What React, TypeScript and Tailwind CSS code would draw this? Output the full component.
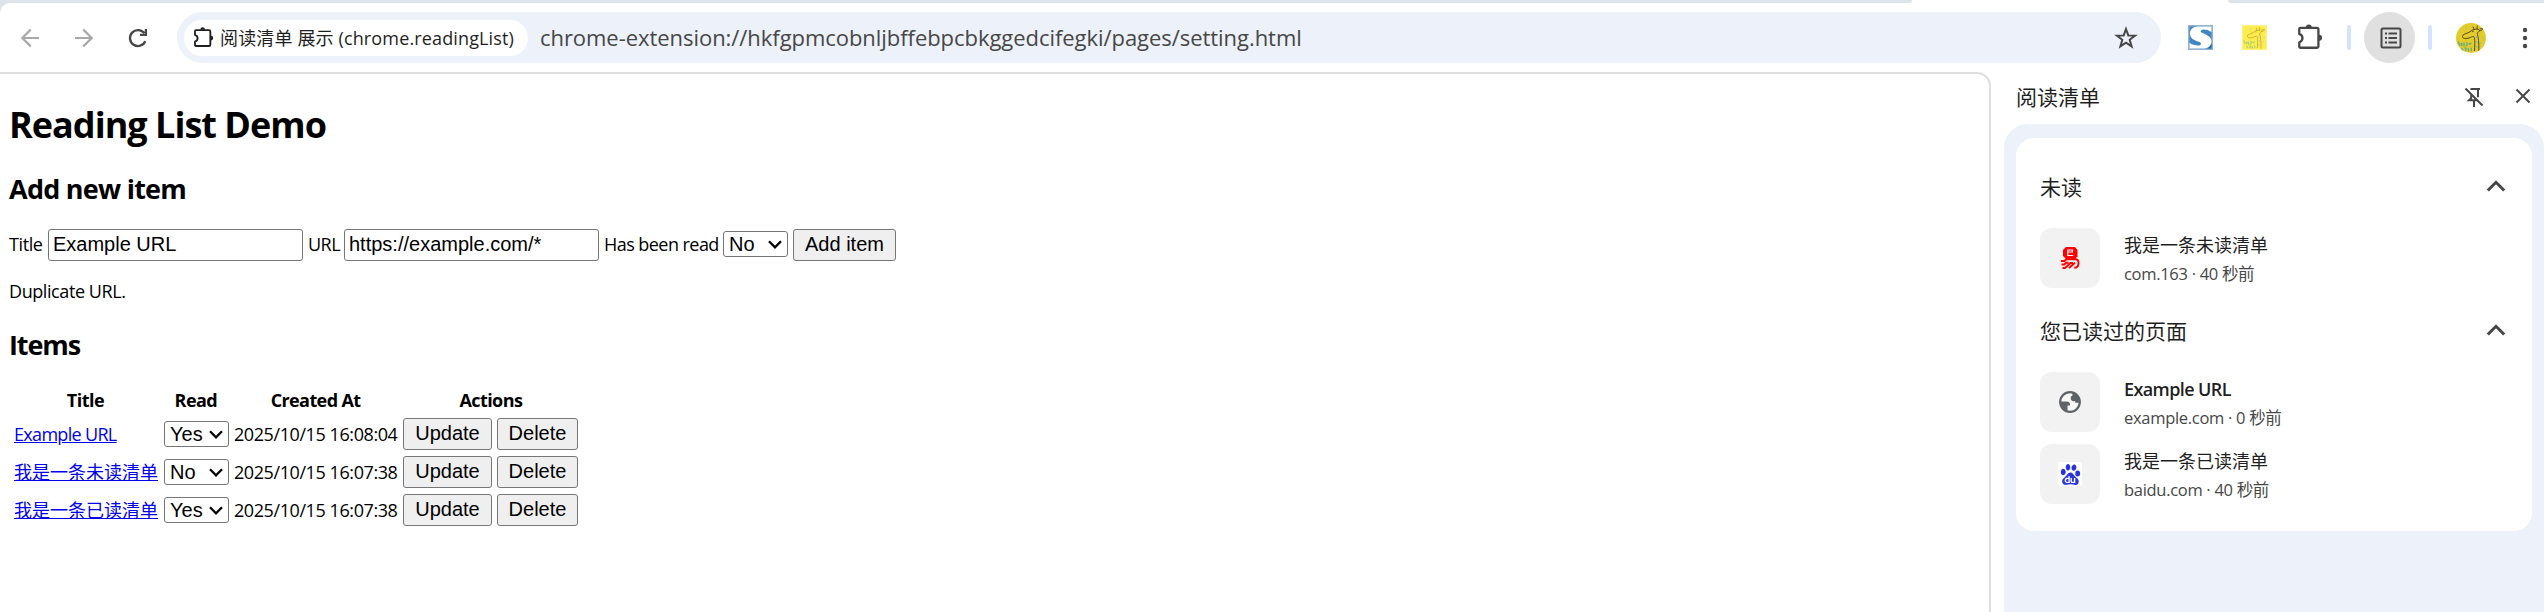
import type { ReactNode } from "react";
import { SiBaidu } from "react-icons/si";

const ARIAL = "font-['Liberation_Sans',Arial,sans-serif] text-[20px] leading-[22px]";

function ExtensionIcon({ className }: { className: string }) {
  return (
    <svg viewBox="0 0 24 24" className={className} fill="none">
      <path
        d="M3.2 3.7H18a1.6 1.6 0 0 1 1.6 1.6V21.2a1.6 1.6 0 0 1-1.6 1.6H2.4a1.2 1.2 0 0 1-1.2-1.2v-4.1c1.9-.6 3.1-2 3.1-4s-1.2-3.4-3.1-4V4.900a1.2 1.2 0 0 1 1.2-1.2z"
        stroke="currentColor"
        strokeWidth="2.2"
        strokeLinejoin="round"
      />
      <path d="M7.6 3.2a2.8 2.8 0 0 1 5.6 0zM20.2 10.4a2.9 2.9 0 0 1 0 5.8z" fill="currentColor" />
    </svg>
  );
}

function Giraffe({ className, soft }: { className: string; soft?: boolean }) {
  return (
    <svg viewBox="0 0 30 30" className={className}>
      <rect width="30" height="30" fill={soft ? "#fdec4f" : "#e3cb2c"} />
      {soft && <rect x=".7" y=".7" width="28.6" height="28.6" fill="none" stroke="#fff27c" strokeWidth="1.4" />}
      <g fill="none" stroke={soft ? "#c9a92f" : "#544a14"} strokeWidth="1" strokeLinecap="round">
        <path d="M18 6.500c-2 .3-3.500 2.300-6 3.300-3 1-5.500 1.700-5.500 3.700 0 2.500 4 2.300 6.500 1.500 2-.7 3-1.500 4.500-1.500 1.500.5 1.500 5 1 14" />
        <path d="M18 6.500l-.8-2.500M21 6l.3-3M18 6.500c2-.8 4.500-.6 5.500.8-.5 1.700-1.500 2.200-2.500 2.700 1.500 4 2 10 1.800 18M24 6l3-.6c-.3 1.400-1.500 2.200-3.200 2.400" />
        <path d="M16.500 8.600h.6" />
      </g>
      <g stroke={soft ? "#a5cf78" : "#62ad84"} strokeWidth="1.300" fill="none" strokeLinecap="round">
        <path d="M2.500 19l1 3M5 20.500c1.500-.5 1.500 2 0 2M8 20v3M10.500 19.500c1.500.5.500 3-.5 3.500M13 21l2-.5M5.500 25.500l1.500 2M9 25c1 0 1.500 1.500.5 2.500M12 25.500l.8 2.500M15 25l.5 2.500" />
      </g>
      <g fill={soft ? "#b4d9a0" : "#7fc4b0"}>
        <circle cx="20.500" cy="14" r=".9" /><circle cx="21" cy="19" r=".9" /><circle cx="26.500" cy="15" r=".8" />
        <circle cx="20.300" cy="24" r=".9" /><circle cx="10" cy="5" r=".7" /><circle cx="25" cy="20" r=".8" />
      </g>
    </svg>
  );
}

function Toolbar() {
  return (
    <div className="flex h-[69px] w-full items-start rounded-tl-[10px] bg-white pt-[9px] text-[#474747]">
      <div className="flex h-[51px] w-[177px] items-center pl-[16px]">
        <svg viewBox="0 0 28 28" className="h-[28px] w-[28px]" fill="none" stroke="#a8a8a8" strokeWidth="2.2">
          <path d="M23 14H6.500M14.700 5.600L6.300 14l8.400 8.400" />
        </svg>
        <svg viewBox="0 0 28 28" className="ml-[26px] h-[28px] w-[28px]" fill="none" stroke="#a8a8a8" strokeWidth="2.2">
          <path d="M5 14h16.500M13.300 5.600l8.400 8.400-8.400 8.400" />
        </svg>
        <svg viewBox="0 0 28 28" className="ml-[26px] h-[28px] w-[28px]" fill="none" stroke="#474747" strokeWidth="2.3">
          <path d="M21.300 17.300A8 8 0 1 1 20.300 9.100M21.900 5v5.900H16" />
        </svg>
      </div>
      <div className="flex h-[51px] w-[1984px] items-center rounded-full bg-[#ecf1fa] pl-[7px]">
        <div className="flex h-[36px] w-[344px] items-center rounded-full bg-white pl-[10px] text-[#1f1f1f]">
          <ExtensionIcon className="h-[20px] w-[20px] -translate-y-[1px]" />
          <span className="ml-[6px] whitespace-nowrap text-[18px] leading-[24px] tracking-[0.14px]">
            阅读清单 展示 (chrome.readingList)
          </span>
        </div>
        <span className="ml-[12px] -translate-y-[1px] whitespace-nowrap text-[22px] leading-[28px] tracking-[-0.05px] text-[#474747]">
          chrome-extension://hkfgpmcobnljbffebpcbkggedcifegki/pages/setting.html
        </span>
        <svg viewBox="0 0 24 24" className="mr-[23px] ml-auto h-[24px] w-[24px]" fill="none" stroke="#474747" strokeWidth="2">
          <path d="M12 3l2.300 6.400 6.800.2-5.400 4.200 1.900 6.600L12 16.600l-5.600 3.800 1.900-6.600-5.400-4.200 6.800-.2z" />
        </svg>
      </div>
      <div className="flex h-[51px] flex-1 items-center">
        <svg viewBox="0 0 25 25" className="ml-[27px] h-[25px] w-[25px]">
          <rect width="25" height="25" fill="#8fb3d1" />
          <rect x="1.500" y="1.500" width="22" height="22" fill="#3f86c3" />
          <path d="M23.500 1.500v5.500c-3-2-6-2.700-8.500-2.500-2.500.3-3 2.300-1 3.300 3 1.500 9.500 3.500 9.500 8.200 0 3.500-2.500 7.500-7.500 7.500H1.500v-5.500c3 2 7 2.800 9.500 2.400 2.400-.4 2.800-2.400.5-3.400C8 15.500 2 14.500 2 8.500c0-4 3-7 7.500-7z" fill="#fff" />
          <path d="M19 23.500c2.500-.6 4-2.800 4.500-5v5z" fill="#2566a3" />
        </svg>
        <Giraffe soft className="ml-[29px] h-[25px] w-[25px]" />
        <ExtensionIcon className="ml-[31px] h-[25px] w-[25px] -translate-y-[1px]" />
        <div className="ml-[24px] h-[25px] w-[4px] rounded-full bg-[#d3e3fd]" />
        <div className="ml-[13px] flex h-[51px] w-[51px] items-center justify-center rounded-full bg-[#e0e0e0]">
          <svg viewBox="0 0 22 22" className="h-[22px] w-[22px] translate-x-[1px]" fill="none" stroke="#474747" strokeWidth="2">
            <rect x="1.500" y="1.500" width="19" height="19" rx="1.500" />
            <path d="M8.500 6.500H17M8.500 11H17M8.500 15.500H17M5 6.500h2M5 11h2M5 15.500h2" />
          </svg>
        </div>
        <div className="ml-[13px] h-[25px] w-[4px] rounded-full bg-[#d3e3fd]" />
        <Giraffe className="ml-[24px] h-[30px] w-[30px] rounded-full" />
        <svg viewBox="0 0 6 24" className="ml-[36px] h-[24px] w-[6px]" fill="#474747">
          <circle cx="3" cy="4" r="2.200" /><circle cx="3" cy="12" r="2.200" /><circle cx="3" cy="20" r="2.200" />
        </svg>
      </div>
    </div>
  );
}

function Select({ value }: { value: string }) {
  return (
    <div className={`${ARIAL} flex h-[26px] w-[65px] shrink-0 items-center justify-between rounded-[3px] border border-[#767676] bg-white pr-[5px] pl-[5px] text-black`}>
      <span>{value}</span>
      <svg viewBox="0 0 14 9" className="h-[9px] w-[14px]" fill="none" stroke="#000" strokeWidth="2.300">
        <path d="M1 1.300l6 6 6-6" />
      </svg>
    </div>
  );
}

function Button({ width, children }: { width: string; children: ReactNode }) {
  return (
    <button className={`${ARIAL} ${width} h-[32px] shrink-0 rounded-[3px] border border-[#767676] bg-[#efefef] pb-[2px] text-center whitespace-nowrap text-black`}>
      {children}
    </button>
  );
}

function Field({ value }: { value: string }) {
  return (
    <div className={`${ARIAL} flex h-[32px] w-[255px] shrink-0 items-center rounded-[3px] border border-[#767676] bg-white pb-[2px] pl-[4px]`}>
      {value}
    </div>
  );
}

const ITEMS = [
  { title: "Example URL", read: "Yes", created: "2025/10/15 16:08:04", latin: true },
  { title: "我是一条未读清单", read: "No", created: "2025/10/15 16:07:38" },
  { title: "我是一条已读清单", read: "Yes", created: "2025/10/15 16:07:38" },
];

function DemoPage() {
  return (
    <main className="h-[542px] w-[1991px] shrink-0 rounded-tr-[14px] border-t-2 border-r-2 border-[#dfdfdf] bg-white pl-[9px] text-[18px] leading-[24px] text-black">
      <h1 className="mt-[27px] h-[48px] text-[36px] leading-[48px] font-bold tracking-[-0.98px]">Reading List Demo</h1>
      <h2 className="mt-[22px] h-[36px] text-[27px] leading-[36px] font-bold tracking-[-0.75px]">Add new item</h2>
      <div className="mt-[22px] flex h-[32px] items-center whitespace-nowrap">
        <span className="w-[39px] -translate-y-[1px] tracking-[-0.4px]">Title</span>
        <Field value="Example URL" />
        <span className="ml-[5px] w-[36px] -translate-y-[1px] tracking-[-0.5px]">URL</span>
        <Field value="https://example.com/*" />
        <span className="ml-[5px] w-[119px] -translate-y-[1px] tracking-[-0.55px]">Has been read</span>
        <div className="-translate-y-[1px]"><Select value="No" /></div>
        <div className="ml-[5px] flex"><Button width="w-[103px]">Add item</Button></div>
      </div>
      <p className="mt-[18px] h-[24px] tracking-[-0.42px]">Duplicate URL.</p>
      <h2 className="mt-[24px] h-[36px] text-[27px] leading-[36px] font-bold tracking-[-1.1px]">Items</h2>
      <div className="mt-[25px] ml-[4px] grid w-[566px] grid-cols-[145px_65px_164px_176px] gap-x-[5.300px] whitespace-nowrap">
        <b className="text-center tracking-[-0.5px]">Title</b>
        <b className="text-center tracking-[-0.6px]">Read</b>
        <b className="text-center tracking-[-0.6px]">Created At</b>
        <b className="text-center tracking-[-0.6px]">Actions</b>
      </div>
      <div className="mt-[6px] ml-[5px] flex flex-col gap-[6px]">
        {ITEMS.map((item) => (
          <div key={item.title} className="flex h-[32px] items-center whitespace-nowrap">
            <div className="w-[150px]">
              <a className={`text-[#0000ee] underline ${item.latin ? "tracking-[-0.68px]" : ""}`}>{item.title}</a>
            </div>
            <Select value={item.read} />
            <span className="ml-[5px] w-[169px] tracking-[-0.42px]">{item.created}</span>
            <div className="flex gap-[5px]">
              <Button width="w-[89px]">Update</Button>
              <Button width="w-[81px]">Delete</Button>
            </div>
          </div>
        ))}
      </div>
    </main>
  );
}

function SectionHeader({ children }: { children: ReactNode }) {
  return (
    <div className="flex h-[32px] items-center justify-between pr-[26px] text-[21px] leading-[32px] text-[#1f1f1f]">
      <span className="-translate-y-[1px]">{children}</span>
      <svg viewBox="0 0 20 12" className="h-[12px] w-[20px] -translate-y-[2px]" fill="none" stroke="#474747" strokeWidth="3">
        <path d="M1.800 10.500L10 2.300l8.200 8.200" />
      </svg>
    </div>
  );
}

function Entry({ icon, title, meta, latin }: { icon: ReactNode; title: string; meta: string; latin?: boolean }) {
  return (
    <div className="flex h-[60px] whitespace-nowrap">
      <div className="flex h-[60px] w-[60px] items-center justify-center rounded-[12px] bg-[#f2f2f2]">{icon}</div>
      <div className="ml-[24px] flex flex-col pt-[4px]">
        <span className={`text-[18px] leading-[27px] text-[#1f1f1f] ${latin ? "font-semibold tracking-[-0.6px]" : ""}`}>{title}</span>
        <span className="mt-[2px] text-[16.500px] leading-[26px] tracking-[-0.3px] text-[#474747]">{meta}</span>
      </div>
    </div>
  );
}

const netease = (
  <svg viewBox="0 0 19 22" className="h-[22px] w-[19px]" fill="none" stroke="#fe0000" strokeWidth="1.900">
    <path d="M5 0h9l2.500 3v6.500L14 12H5L2 9V3z" fill="#fe0000" stroke="none" />
    <path d="M6.500 5h5V3H7.500M6.800 2.500v6h5.500" stroke="#fff" strokeWidth="1.200" />
    <path d="M0 14h3.500l1.800-1.700h9.200c2.300 0 3 1.700 3 3.700 0 3-1.300 4.800-4.200 4.800M.5 17.500h2.800l1.800-1.700h2.500M1.500 21h2.500l5.500-5h2.500M8 21l6-5.300" />
  </svg>
);

const globe = (
  <svg viewBox="0 0 22 22" className="h-[22px] w-[22px]">
    <circle cx="11" cy="11" r="9.800" fill="#f8f8f8" stroke="#5f6368" strokeWidth="2.200" />
    <path d="M1.500 10.500h6c2.200 0 3.500 1.200 3.500 3v1H8.500V20.500C4.500 20 1.200 16.500 1.500 10.500z" fill="#5f6368" />
    <path d="M13.500 1.800v2c0 1-.8 1.700-1.700 1.700v2.300c0 1.400 1.200 2.500 2.600 2.500h1.800v1.500h4.500C21.200 7 18.500 3 13.500 1.800z" fill="#5f6368" />
  </svg>
);

const baidu = (
  <div className="flex h-[24px] w-[24px] items-center justify-center rounded-[2px] bg-white">
    <SiBaidu className="h-[21px] w-[21px] text-[#2932e1]" />
  </div>
);

function SidePanel() {
  return (
    <aside className="flex h-[542px] w-[540px] shrink-0 flex-col bg-white">
      <div className="flex h-[52px] items-center pl-[12px] text-[21px] leading-[28px] text-[#1f1f1f]">
        <span className="w-[448px] -translate-y-[1.500px]">阅读清单</span>
        <svg viewBox="0 0 22 22" className="h-[22px] w-[22px] -translate-x-[1px] -translate-y-[1px]" fill="none" stroke="#474747" strokeWidth="2">
          <path d="M2.500 2.500l17 17M7.500 3h9.500M15 3v8.200M8.200 8v4.200L6 14.300h8M11 14.500V21" />
        </svg>
        <svg viewBox="0 0 16 16" className="ml-[29px] h-[16px] w-[16px] -translate-y-[2px]" fill="none" stroke="#474747" strokeWidth="2">
          <path d="M1.500 1.500l13 13M14.500 1.500l-13 13" />
        </svg>
      </div>
      <div className="flex-1 rounded-t-[24px] bg-[#ecf1fa] px-[12px] pt-[14px]">
        <div className="flex h-[393px] flex-col rounded-[18px] bg-white pt-[34px] pl-[24px]">
          <SectionHeader>未读</SectionHeader>
          <div className="mt-[24px] mb-[28px]">
            <Entry icon={netease} title="我是一条未读清单" meta="com.163 · 40 秒前" />
          </div>
          <SectionHeader>您已读过的页面</SectionHeader>
          <div className="mt-[24px] flex flex-col gap-[12px]">
            <Entry icon={globe} title="Example URL" meta="example.com · 0 秒前" latin />
            <Entry icon={baidu} title="我是一条已读清单" meta="baidu.com · 40 秒前" />
          </div>
        </div>
      </div>
    </aside>
  );
}

export default function App() {
  return (
    <div className="flex h-[612px] w-[2544px] flex-col overflow-hidden bg-white font-['Open_Sans','Noto_Sans_CJK_SC',sans-serif]">
      <div className="flex h-[3px] w-full shrink-0 justify-between">
        <div className="h-[3px] w-[1912px] rounded-br-[10px] bg-[#dde3e8]" />
        <div className="h-[3px] w-[316px] rounded-bl-[10px] bg-[#dde3e8]" />
      </div>
      <div className="h-[69px] w-full shrink-0 bg-[linear-gradient(to_right,#dde3e8_12px,#ffffff_12px)]">
        <Toolbar />
      </div>
      <div className="flex w-full justify-between">
        <DemoPage />
        <SidePanel />
      </div>
    </div>
  );
}
